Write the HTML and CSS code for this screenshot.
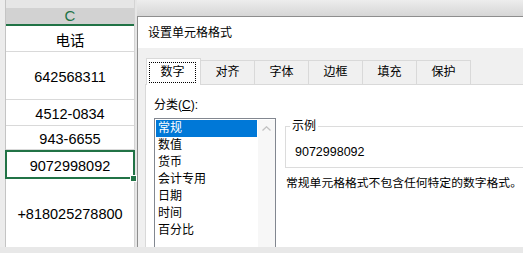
FILE: index.html
```html
<!DOCTYPE html>
<html lang="zh-CN">
<head>
    <meta charset="UTF-8">
    <meta name="viewport" content="width=device-width, initial-scale=1.0">
    <title>设置单元格格式</title>
    <link rel="stylesheet" href="styles.css">
</head>
<body>
    <div class="screen">
        <!-- Sheet column behind the dialog -->
        <div class="sheet">
            <div class="row-heads"></div>
            <div class="column">
                <div class="col-top"></div>
                <div class="col-head">C</div>
                <div class="cell r1">电话</div>
                <div class="cell r2">642568311</div>
                <div class="cell r3">4512-0834</div>
                <div class="cell r4">943-6655</div>
                <div class="cell r5 active">9072998092<span class="fill-handle"></span></div>
                <div class="cell r6">+818025278800</div>
            </div>
        </div>

        <div class="right">
            <div class="backdrop"></div>
            <div class="dialog">
                <div class="title">设置单元格格式</div>
                <div class="dialog-body">
                    <div class="tabs">
                        <div class="tab on"><span>数字</span></div>
                        <div class="tab">对齐</div>
                        <div class="tab">字体</div>
                        <div class="tab">边框</div>
                        <div class="tab">填充</div>
                        <div class="tab">保护</div>
                    </div>
                    <div class="panel">
                        <div class="cat">
                            <div class="label">分类(<u>C</u>):</div>
                            <div class="listbox">
                                <ul class="items">
                                    <li class="sel">常规</li>
                                    <li>数值</li>
                                    <li>货币</li>
                                    <li>会计专用</li>
                                    <li>日期</li>
                                    <li>时间</li>
                                    <li>百分比</li>
                                </ul>
                                <div class="scroll">
                                    <svg width="9" height="5" viewBox="0 0 9 5"><path d="M0.5 4.5 L4.5 0.8 L8.5 4.5" fill="none" stroke="#c2c2c2" stroke-width="1.3"/></svg>
                                </div>
                            </div>
                        </div>
                        <div class="detail">
                            <fieldset class="sample">
                                <legend>示例</legend>
                                <div class="value">9072998092</div>
                            </fieldset>
                            <p class="desc">常规单元格格式不包含任何特定的数字格式。</p>
                        </div>
                    </div>
                </div>
            </div>
        </div>
    </div>
</body>
</html>
```
FILE: styles.css
```css
* {
    box-sizing: border-box;
}
body {
    margin: 0;
    width: 523px;
    height: 253px;
    overflow: hidden;
    background-color: #e8e8e8;
    font-family: "Liberation Sans", "Noto Sans CJK SC", sans-serif;
    color: #000000;
}
.screen {
    display: flex;
    height: 247px;
    overflow: hidden;
}

/* sheet */
.sheet {
    width: 137px;
    display: flex;
    background-color: #e6e6e6;
}
.row-heads {
    width: 6px;
    background-color: #ececec;
    border-right: 1px solid #c4c4c4;
}
.column {
    width: 129px;
    background-color: #ffffff;
    border-right: 1px solid #d4d4d4;
}
.col-top {
    height: 8px;
    background-color: #e6e6e6;
}
.col-head {
    height: 18px;
    padding-top: 1px;
    background-color: #d2d2d2;
    border-bottom: 2px solid #217346;
    color: #217346;
    font-size: 15px;
    line-height: 14px;
    text-align: center;
}
.cell {
    display: flex;
    align-items: center;
    justify-content: center;
    padding-top: 2px;
    border-bottom: 1px solid #d9d9d9;
    font-size: 14.5px;
    white-space: nowrap;
    position: relative;
}
.r1 { height: 26px; }
.r2 { height: 48px; }
.r3 { height: 26px; }
.r4 { height: 24px; }
.r5 { height: 29px; }
.r6 { height: 68px; border-bottom: none; }
.cell.active {
    border: 2px solid #217346;
    margin: 0 -1px;
}
.fill-handle {
    position: absolute;
    right: -3px;
    bottom: -4px;
    width: 5px;
    height: 5px;
    background-color: #217346;
    box-shadow: 0 0 0 1px #ffffff;
}

/* dialog */
.right {
    flex: 1;
    display: flex;
    flex-direction: column;
    min-width: 0;
}
.backdrop {
    height: 16px;
    background: linear-gradient(#ededed, #d6d6d6);
}
.dialog {
    flex: 1;
    display: flex;
    flex-direction: column;
    min-height: 0;
    background-color: #f0f0f0;
    border-top: 1px solid #8e8e8e;
    border-left: 1px solid #8e8e8e;
    font-size: 12px;
}
.title {
    height: 31px;
    padding: 8px 0 0 10px;
    line-height: 16px;
    background-color: #ffffff;
}
.dialog-body {
    flex: 1;
    display: flex;
    flex-direction: column;
    min-height: 0;
    padding: 10px 0 0 7px;
}
.tabs {
    display: flex;
    align-items: flex-end;
    height: 26px;
    padding-left: 1px;
}
.tab {
    width: 55px;
    height: 24px;
    margin-left: -1px;
    border: 1px solid #d9d9d9;
    border-bottom: none;
    background-color: #f0f0f0;
    line-height: 22px;
    text-align: center;
}
.tab.on {
    height: 27px;
    margin-left: 0;
    margin-bottom: -1px;
    padding: 3px 4px 1px 2px;
    background-color: #ffffff;
    position: relative;
    z-index: 1;
}
.tab.on span {
    display: block;
    border: 1px dotted #000000;
    line-height: 19px;
}
.panel {
    flex: 1;
    display: flex;
    padding: 12px 0 0 8px;
    background-color: #ffffff;
    border: 1px solid #d9d9d9;
    border-right: none;
}
.label {
    line-height: 16px;
    margin-bottom: 5px;
}
.listbox {
    display: flex;
    width: 122px;
    height: 140px;
    padding: 1px 0 0 1px;
    border: 1px solid #828790;
    background-color: #ffffff;
}
.items {
    width: 101px;
    margin: 0;
    padding: 0;
    list-style: none;
}
.items li {
    height: 17px;
    padding-left: 2px;
    line-height: 17px;
}
.items li.sel {
    background-color: #0078d7;
    color: #ffffff;
}
.scroll {
    width: 17px;
    margin-left: 1px;
    display: flex;
    justify-content: center;
    padding-top: 6px;
    background-color: #f7f7f7;
}
.detail {
    flex: 1;
    min-width: 0;
    margin-left: 9px;
    padding-top: 21px;
}
.sample {
    margin: 0;
    padding: 10px 0 7px 9px;
    min-width: 0;
    border: 1px solid #dcdcdc;
    border-right: none;
}
.sample legend {
    margin-left: -5px;
    padding: 0 2px;
    line-height: 16px;
}
.value {
    font-size: 12.5px;
    line-height: 16px;
}
.desc {
    margin: 7px 0 0 1px;
    font-size: 11.8px;
    line-height: 16px;
    white-space: nowrap;
}
```
